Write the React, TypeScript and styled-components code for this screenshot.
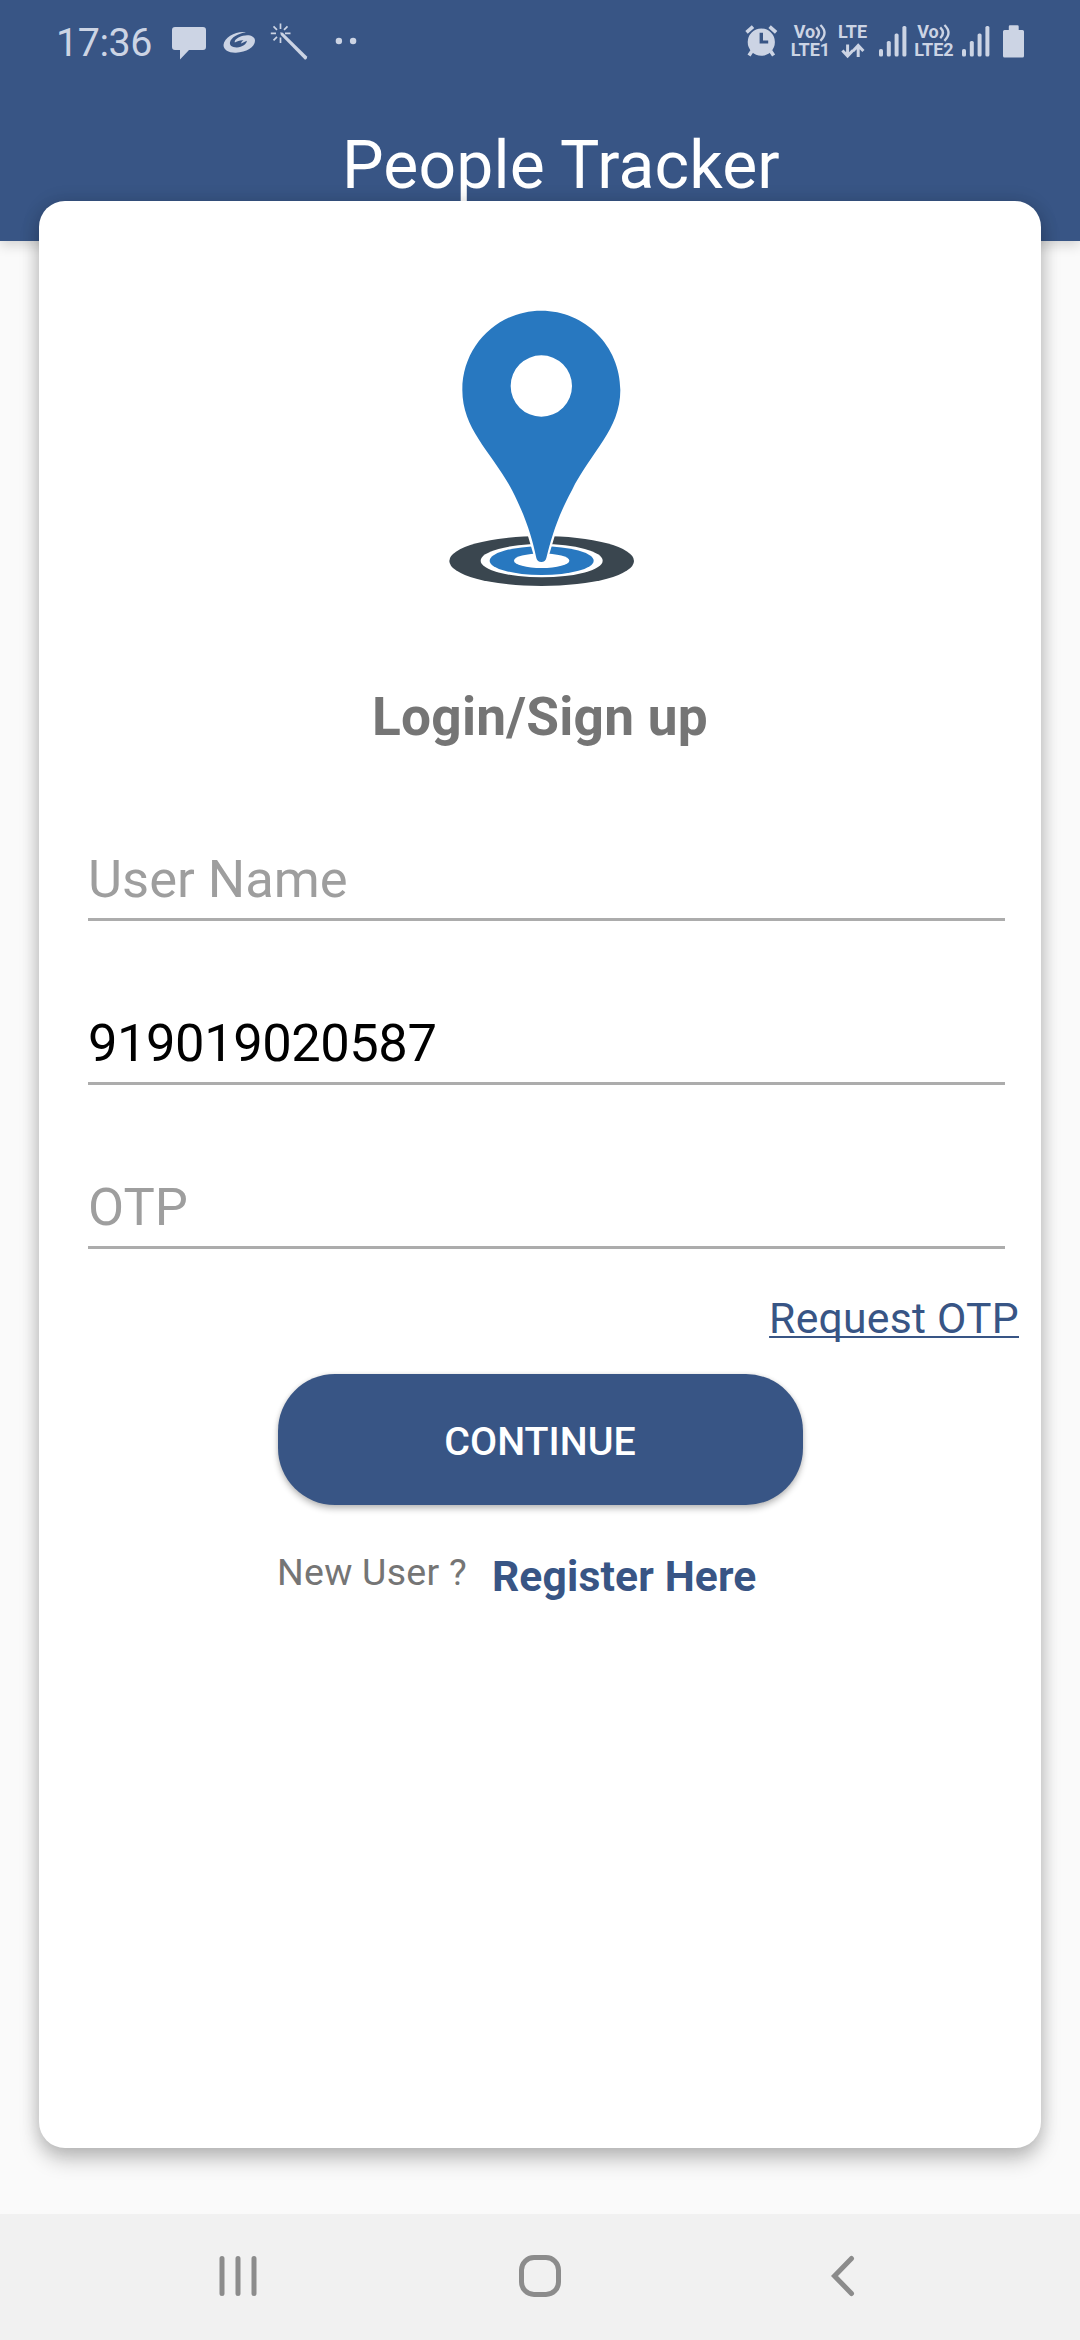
import React from "react";
import styled, { createGlobalStyle } from "styled-components";

const BLUE = "#385585";
const STATUS = "#ccd4e4";

const GlobalStyle = createGlobalStyle`
  *, *::before, *::after { box-sizing: border-box; }
  body { margin: 0; background: #fafafa; font-family: Roboto, "Noto Sans", sans-serif; }
`;

const Screen = styled.div`
  display: flex;
  flex-direction: column;
  width: 1080px;
  height: 2340px;
  background: #fafafa;
  overflow: hidden;
`;

const Header = styled.header`
  flex: none;
  height: 241px;
  background: ${BLUE};
  box-shadow: 0 4px 12px rgba(0, 0, 0, 0.16);
`;

const StatusBar = styled.div`
  display: flex;
  align-items: flex-start;
  height: 90px;
  padding: 23px 56px 0 56px;
  color: ${STATUS};
`;

const Clock = styled.span`
  width: 116px;
  font-size: 39.4px;
  line-height: 40px;
  letter-spacing: -0.4px;
`;

const StatusIcon = styled.svg<{ $gap?: number }>`
  display: block;
  flex: none;
  margin-left: ${(p) => p.$gap ?? 0}px;
  fill: currentColor;
`;

const Spacer = styled.div`
  flex: 1;
`;

const Network = styled.div<{ $width: number; $gap: number }>`
  display: flex;
  flex-direction: column;
  align-items: center;
  flex: none;
  width: ${(p) => p.$width}px;
  margin-left: ${(p) => p.$gap}px;
  font-size: 18px;
  font-weight: 700;
  line-height: 18px;
  white-space: nowrap;
`;

const VoiceLine = styled.div`
  display: flex;
  height: 18px;
`;

const Title = styled.h1`
  margin: 37px 0 0 342px;
  color: #fff;
  font-size: 66px;
  font-weight: 400;
  line-height: 77px;
  letter-spacing: 0.15px;
`;

const Card = styled.main`
  position: relative;
  flex: none;
  display: flex;
  flex-direction: column;
  height: 1947px;
  margin: -40px 39px 0;
  padding-top: 89px;
  border-radius: 26px;
  background: #fff;
  box-shadow: 0 12px 20px rgba(0, 0, 0, 0.22), 0 0 18px rgba(0, 0, 0, 0.14);
`;

const Pin = styled.svg`
  display: block;
  align-self: center;
  flex: none;
  margin-left: 10px;
`;

const Heading = styled.h2`
  margin: 86px 0 0;
  color: #757575;
  font-size: 53.2px;
  font-weight: 700;
  line-height: 62px;
  letter-spacing: 0.25px;
  text-align: center;
`;

const Fields = styled.div`
  display: flex;
  flex-direction: column;
  gap: 92px;
  margin: 101px 36px 0 49px;
`;

const Field = styled.input<{ $spacing?: number }>`
  display: block;
  width: 100%;
  height: 72px;
  padding: 0 0 9px;
  border: 0;
  border-bottom: 3px solid #acacac;
  border-radius: 0;
  outline: none;
  background: transparent;
  color: #000;
  font: 400 52.5px/60px Roboto, "Noto Sans", sans-serif;
  letter-spacing: ${(p) => p.$spacing ?? 0}px;

  &::placeholder {
    color: #9e9e9e;
    opacity: 1;
  }
`;

const RequestLink = styled.a`
  align-self: flex-end;
  margin: 44px 22px 0 0;
  color: ${BLUE};
  font-size: 42.7px;
  line-height: 50px;
  letter-spacing: 0.25px;
  text-decoration: underline;
  text-decoration-thickness: 2px;
  text-underline-offset: 3px;
  text-decoration-skip-ink: none;
`;

const ContinueButton = styled.button`
  align-self: center;
  flex: none;
  width: 525px;
  height: 131px;
  margin-top: 31px;
  padding: 4px 0 0;
  border: 0;
  border-radius: 57px;
  background: ${BLUE};
  box-shadow: 0 4px 6px rgba(0, 0, 0, 0.24), 0 0 4px rgba(0, 0, 0, 0.1);
  color: #fff;
  font: 500 39.4px/46px Roboto, "Noto Sans", sans-serif;
`;

const RegisterRow = styled.div`
  display: flex;
  align-items: flex-start;
  gap: 25px;
  margin: 46px 0 0 238px;
`;

const NewUser = styled.span`
  color: #757575;
  font-size: 37.5px;
  line-height: 43px;
  letter-spacing: 0.25px;
`;

const RegisterLink = styled.a`
  color: ${BLUE};
  font-size: 42.6px;
  font-weight: 700;
  line-height: 50px;
  letter-spacing: 0.15px;
`;

const NavBar = styled.nav`
  display: flex;
  align-items: flex-start;
  height: 126px;
  margin-top: auto;
  padding: 40px 0 0 217px;
  background: #f1f1f1;
`;

const NavIcon = styled.svg<{ $gap?: number }>`
  display: block;
  flex: none;
  margin-left: ${(p) => p.$gap ?? 0}px;
  fill: none;
  stroke: #8c8c8c;
  stroke-width: 5;
  stroke-linecap: round;
`;

const Signal = ({ gap }: { gap: number }) => (
  <StatusIcon $gap={gap} width="28" height="37" viewBox="0 0 28 37">
    <rect x="0" y="26" width="4" height="7.5" rx="1.6" />
    <rect x="7.8" y="18" width="4" height="15.5" rx="1.6" />
    <rect x="15.6" y="10.5" width="4" height="23" rx="1.6" />
    <rect x="23.4" y="3" width="4" height="30.5" rx="1.6" />
  </StatusIcon>
);

const VoLte = ({ label, width, gap }: { label: string; width: number; gap: number }) => (
  <Network $width={width} $gap={gap}>
    <VoiceLine>
      Vo
      <StatusIcon width="12" height="20" viewBox="0 0 12 20">
        <path
          d="M1.2 4.4Q6.6 9.8 1.2 15.2M5.4 2Q13.6 9.8 5.4 17.8"
          fill="none"
          stroke="currentColor"
          strokeWidth="2.4"
        />
      </StatusIcon>
    </VoiceLine>
    <span>{label}</span>
  </Network>
);

export default function App() {
  return (
    <>
      <GlobalStyle />
      <Screen>
        <Header>
          <StatusBar>
            <Clock>17:36</Clock>
            <StatusIcon width="34" height="37" viewBox="0 0 34 37">
              <path d="M3 4H31Q34 4 34 7V24Q34 27 31 27H17L8 36.5V27H3Q0 27 0 24V7Q0 4 3 4Z" />
            </StatusIcon>
            <StatusIcon $gap={17} width="33" height="37" viewBox="0 0 33 37">
              <path d="M23 9.2C14 7.5 1 14 .5 22C.5 27 6 30 13 29.7C23 29.5 32 24 32 17.8C32 13 26 11.3 20 12.8C15 14 11.2 17 11.8 19.6C14 18 17 17 20.5 17.2C18.8 18.4 18 19.4 18.2 20.4L23.8 17.8C24 21 19 24.3 14 24.4C9 24.5 6.3 22.5 7 19.3C8 14.5 15 10.4 23 9.2Z" />
            </StatusIcon>
            <StatusIcon $gap={14} width="38" height="38" viewBox="0 0 38 38">
              <path
                d="M10.5.5V6M10.5 14.5V20M.8 10.3H6M15 10.3H20.5M3.5 3.3L7 6.8M17.5 3.3L14 6.8M3.5 17.3L7 13.8"
                fill="none"
                stroke="currentColor"
                strokeWidth="1.7"
              />
              <path d="M10.2 9.3L12.8 9.8L37 33.5Q37.5 36 35 36.8L10.8 12Z" />
            </StatusIcon>
            <StatusIcon $gap={27} width="24" height="37" viewBox="0 0 24 37">
              <circle cx="3.9" cy="18" r="3.2" />
              <circle cx="18.1" cy="18" r="3.2" />
            </StatusIcon>
            <Spacer />
            <StatusIcon width="33" height="37" viewBox="0 0 33 37">
              <path
                fillRule="evenodd"
                d="M16.3 5.5A13.6 13.6 0 1 1 16.3 32.7A13.6 13.6 0 0 1 16.3 5.5ZM14.6 9.8V20.6H23.2V17.4H18V9.8Z"
              />
              <path
                d="M1.5 9.4L8 3.6M31.1 9.4L24.6 3.6M7 28L4 32.6M25.6 28L28.6 32.6"
                stroke="currentColor"
                strokeWidth="3.6"
              />
            </StatusIcon>
            <VoLte label="LTE1" width={41} gap={12} />
            <Network $width={31} $gap={6}>
              <span>LTE</span>
              <StatusIcon width="24" height="18" viewBox="0 0 24 18">
                <path
                  d="M6.6 3.5V14M1.4 9.4L6.6 15L11.8 9.4M17.2 16V6M12 10L17.2 4.4L22.4 10"
                  fill="none"
                  stroke="currentColor"
                  strokeWidth="3"
                />
              </StatusIcon>
            </Network>
            <Signal gap={11} />
            <VoLte label="LTE2" width={42} gap={6} />
            <Signal gap={7} />
            <StatusIcon $gap={13} width="21" height="37" viewBox="0 0 21 37">
              <path d="M7 2.3H14.5Q15.7 2.3 15.7 3.5V7H19.5Q21 7 21 8.5V33Q21 34.6 19.5 34.6H1.5Q0 34.6 0 33V8.5Q0 7 1.5 7H5.8V3.5Q5.8 2.3 7 2.3Z" />
            </StatusIcon>
          </StatusBar>
          <Title>People Tracker</Title>
        </Header>

        <Card>
          <Pin width="230" height="310" viewBox="0 0 690 930">
            <ellipse cx="335" cy="813" rx="277" ry="75" fill="#3a464f" />
            <ellipse cx="335" cy="812" rx="183" ry="50" fill="#fff" />
            <ellipse cx="335" cy="812" rx="156" ry="43" fill="#2878c0" />
            <ellipse cx="335" cy="812" rx="83" ry="22" fill="#fff" />
            <path
              d="M284 690L320 812Q334 824 348 812L384 690Z"
              fill="#fff"
              stroke="#fff"
              strokeWidth="8"
            />
            <path
              fill="#2878c0"
              fillRule="evenodd"
              d="M334 62C465 62 571 168 571 300C571 420 482 486 425 602C381 684 365 741 349 804Q346 816 334 816Q322 816 319 804C306 741 288 684 247 602C186 486 97 420 97 300C97 168 203 62 334 62ZM334 196A92 92 0 1 0 334 380A92 92 0 1 0 334 196Z"
            />
          </Pin>
          <Heading>Login/Sign up</Heading>
          <Fields>
            <Field placeholder="User Name" />
            <Field defaultValue="919019020587" $spacing={-0.47} />
            <Field placeholder="OTP" />
          </Fields>
          <RequestLink>Request OTP</RequestLink>
          <ContinueButton>CONTINUE</ContinueButton>
          <RegisterRow>
            <NewUser>New User ?</NewUser>
            <RegisterLink>Register Here</RegisterLink>
          </RegisterRow>
        </Card>

        <NavBar>
          <NavIcon width="42" height="44" viewBox="0 0 42 44">
            <path d="M5 4.5V39.5M21 4.5V39.5M37 4.5V39.5" />
          </NavIcon>
          <NavIcon $gap={259} width="44" height="44" viewBox="0 0 44 44">
            <rect x="3.5" y="3.5" width="37" height="37" rx="12.5" />
          </NavIcon>
          <NavIcon $gap={268} width="28" height="44" viewBox="0 0 28 44">
            <path d="M21.5 4.5L4.5 22L21.5 39.5" />
          </NavIcon>
        </NavBar>
      </Screen>
    </>
  );
}
